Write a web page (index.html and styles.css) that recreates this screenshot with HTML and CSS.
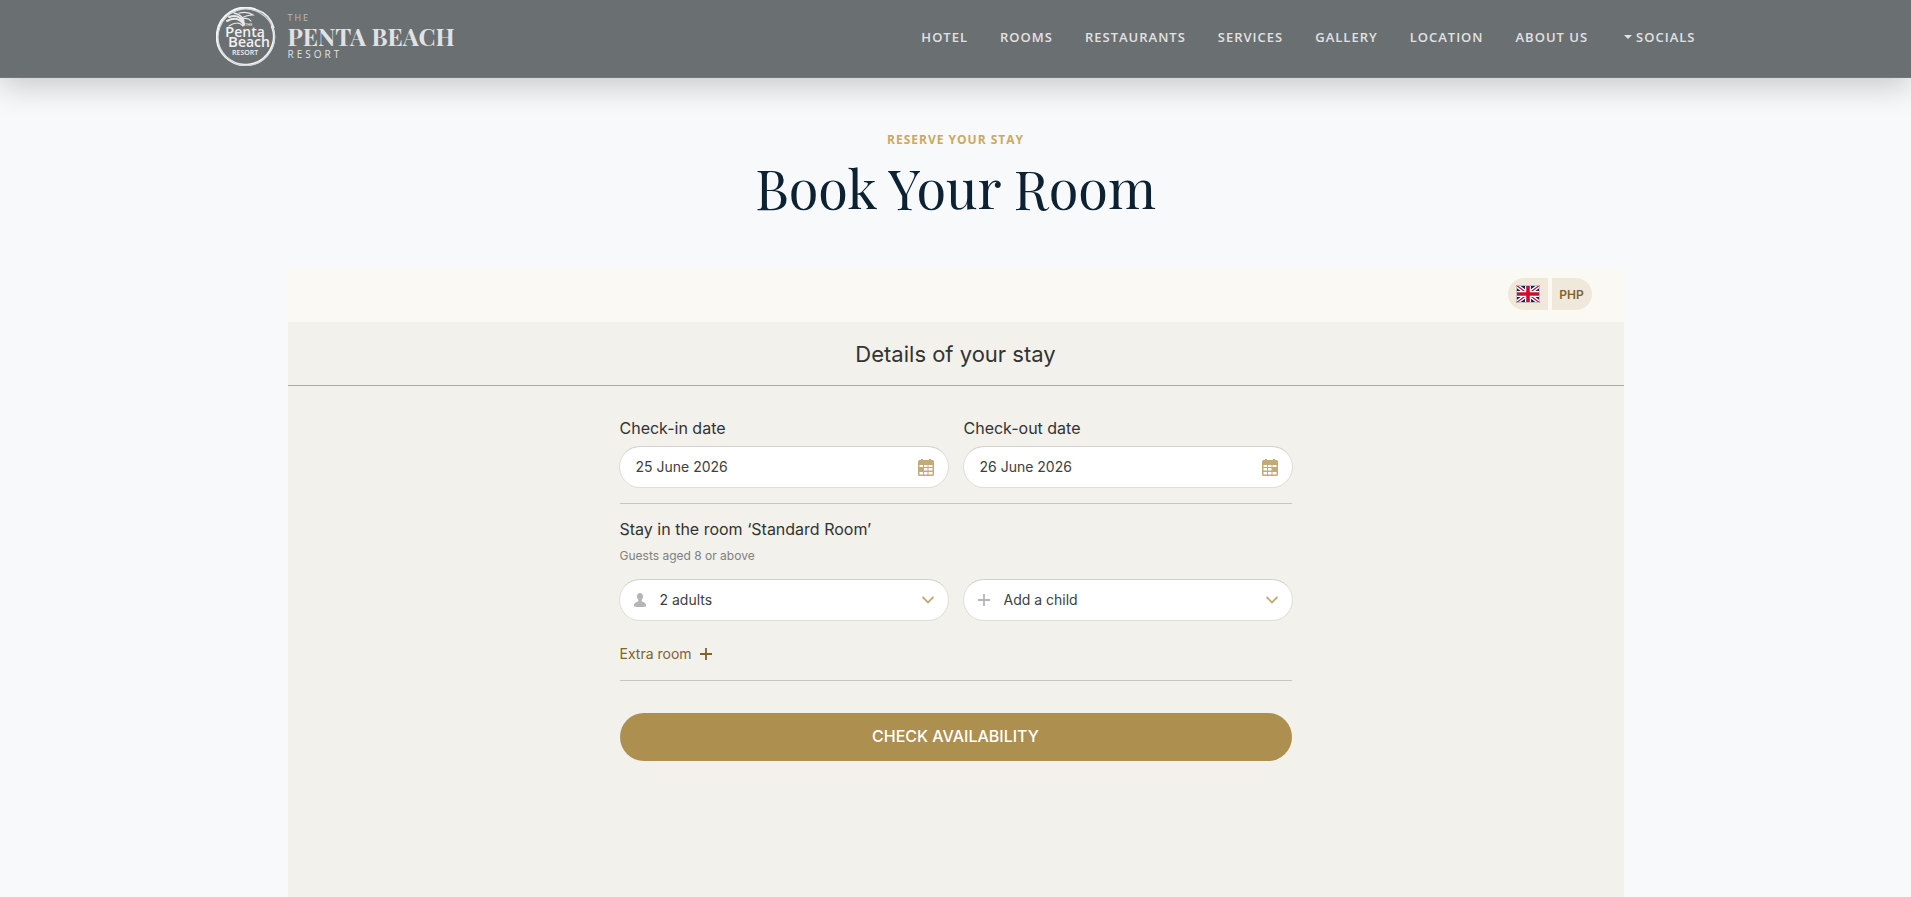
FILE: index.html
```html
<!DOCTYPE html>
<html lang="en">
<head>
    <meta charset="UTF-8">
    <meta name="viewport" content="width=device-width, initial-scale=1.0">
    <title>The Penta Beach Resort - Book Your Room</title>
    <link rel="stylesheet" href="styles.css">
</head>
<body>
    <header class="site-header">
        <div class="header-inner">
            <a href="#" class="brand">
                <svg class="brand-logo" viewBox="0 0 60 60" aria-hidden="true">
                    <!-- brushed ring -->
                    <path d="M56 19A28.500 28.500 0 1 1 39 2.500" fill="none" stroke="#f4f5f5" stroke-width="2.4" stroke-linecap="round"/>
                    <path d="M44 6A27.500 27.500 0 0 0 4 20A27.500 27.500 0 0 0 14 53A27.500 27.500 0 0 0 51 49A27.500 27.500 0 0 0 44 6" fill="none" stroke="#d4d7d8" stroke-width="1.2"/>
                    <path d="M40 2.500Q54 7 58 21" fill="none" stroke="#eceded" stroke-width="1.6"/>
                    <!-- palm -->
                    <g fill="none" stroke="#e8eaea" stroke-linecap="round">
                        <path d="M11 14Q22 8 28 18" stroke-width="2"/>
                        <path d="M13 10Q24 6 28 17" stroke-width="2"/>
                        <path d="M18 6Q28 8 28 17" stroke-width="1.5"/>
                        <path d="M13 19Q22 13 27 19" stroke-width="1.2"/>
                        <path d="M23 6Q32 4 37 8Q30 8 24 12" stroke-width="1.2"/>
                        <path d="M26 12Q32 10 35 14" stroke-width="1.2"/>
                    </g>
                    <g class="logo-text">
                        <text x="29" y="19" font-size="4">THE</text>
                        <text x="9" y="30" font-size="14"><tspan font-size="15">P</tspan>enta</text>
                        <text x="12" y="40" font-size="14"><tspan font-size="15">B</tspan>each</text>
                        <text x="16" y="48" font-size="7">RESORT</text>
                    </g>
                </svg>
                <span class="brand-text">
                    <span class="brand-the">THE</span>
                    <span class="brand-name">PENTA BEACH</span>
                    <span class="brand-resort">RESORT</span>
                </span>
            </a>
            <nav class="nav">
                <a href="#" class="nav-link">HOTEL</a>
                <a href="#" class="nav-link">ROOMS</a>
                <a href="#" class="nav-link">RESTAURANTS</a>
                <a href="#" class="nav-link">SERVICES</a>
                <a href="#" class="nav-link">GALLERY</a>
                <a href="#" class="nav-link">LOCATION</a>
                <a href="#" class="nav-link">ABOUT US</a>
                <button type="button" class="nav-link nav-toggle"><span class="caret"></span>SOCIALS</button>
            </nav>
        </div>
    </header>

    <main class="page">
        <p class="eyebrow">RESERVE YOUR STAY</p>
        <h1 class="title">Book Your Room</h1>

        <section class="booking">
            <div class="booking-bar">
                <button type="button" class="pill pill-left" aria-label="Language: English">
                    <svg class="flag" viewBox="0 0 24 18" aria-hidden="true">
                        <path fill="#012169" d="M0 0h24v18H0z"/>
                        <path stroke="#fff" stroke-width="4" d="M0 0l24 18M24 0L0 18"/>
                        <path stroke="#c8102e" stroke-width="1.3" d="M0 0l24 18M24 0L0 18"/>
                        <path stroke="#fff" stroke-width="6" d="M12 0v18M0 9h24"/>
                        <path stroke="#c8102e" stroke-width="3.6" d="M12 0v18M0 9h24"/>
                        <path fill="none" stroke="#c4bfb9" stroke-width="1" d="M.5.5h23v17H.5z"/>
                    </svg>
                </button>
                <button type="button" class="pill pill-right">PHP</button>
            </div>

            <h2 class="booking-title">Details of your stay</h2>

            <form class="booking-form">
                <div class="group">
                    <div class="row">
                        <div>
                            <label class="label" for="checkIn">Check-in date</label>
                            <div class="field">
                                <input class="control" type="text" id="checkIn" value="25 June 2026" readonly>
                                <svg class="icon-end" viewBox="0 0 16 17" aria-hidden="true">
                                    <path fill="#c4aa74" fill-rule="evenodd" d="M3 0h2v1h6V0h2v1h1.500a1.500 1.500 0 0 1 1.500 1.500V15.500a1.500 1.500 0 0 1-1.500 1.500h-13A1.500 1.500 0 0 1 0 15.500v-13A1.500 1.500 0 0 1 1.500 1H3zM1.500 6v2H5V6zM6 6v2h3.500V6zM10.500 6v2h4V6zM6 9v2.500h3.500V9zM10.500 9v2.500h4V9zM1.500 13v2.500H5V13zM6 13v2.500h3.500V13zM10.500 13v2.500h4V13z"/>
                                </svg>
                            </div>
                        </div>
                        <div>
                            <label class="label" for="checkOut">Check-out date</label>
                            <div class="field">
                                <input class="control" type="text" id="checkOut" value="26 June 2026" readonly>
                                <svg class="icon-end" viewBox="0 0 16 17" aria-hidden="true">
                                    <path fill="#c4aa74" fill-rule="evenodd" d="M3 0h2v1h6V0h2v1h1.500a1.500 1.500 0 0 1 1.500 1.500V15.500a1.500 1.500 0 0 1-1.500 1.500h-13A1.500 1.500 0 0 1 0 15.500v-13A1.500 1.500 0 0 1 1.500 1H3zM1.500 6v2H5V6zM6 6v2h3.500V6zM10.500 6v2h4V6zM1.500 9v2.500H5V9zM6 9v2.500h3.500V9zM1.500 13v2.500H5V13zM6 13v2.500h3.500V13zM10.500 13v2.500h4V13z"/>
                                </svg>
                            </div>
                        </div>
                    </div>
                </div>

                <div class="group">
                    <p class="label">Stay in the room ‘Standard Room’</p>
                    <p class="hint">Guests aged 8 or above</p>
                    <div class="row">
                        <div class="field">
                            <svg class="icon-start" viewBox="0 0 12 14" aria-hidden="true">
                                <path fill="#b5b5b5" d="M6 0C8 0 9 1.300 9 3.200 9 5 8.200 6.200 7.600 6.800V8.300C9 9.300 12 9.500 12 12.500V13.500Q6 14.500 0 13.500V12.500C0 9.500 3 9.300 4.400 8.300V6.800C3.800 6.200 3 5 3 3.200 3 1.300 4 0 6 0z"/>
                            </svg>
                            <select class="control control-select" aria-label="Adults">
                                <option>1 adult</option>
                                <option selected>2 adults</option>
                                <option>3 adults</option>
                            </select>
                            <svg class="chevron" viewBox="0 0 12 8" aria-hidden="true">
                                <path fill="none" stroke="#c4aa74" stroke-width="1.800" d="M.6 1L6 6.400 11.400 1"/>
                            </svg>
                        </div>
                        <div class="field">
                            <svg class="icon-start" viewBox="0 0 12 12" aria-hidden="true">
                                <path stroke="#b5b5b5" stroke-width="1.800" d="M6 0v12M0 6h12"/>
                            </svg>
                            <select class="control control-select" aria-label="Children">
                                <option>Add a child</option>
                                <option>1 child</option>
                                <option>2 children</option>
                            </select>
                            <svg class="chevron" viewBox="0 0 12 8" aria-hidden="true">
                                <path fill="none" stroke="#c4aa74" stroke-width="1.800" d="M.6 1L6 6.400 11.400 1"/>
                            </svg>
                        </div>
                    </div>
                    <button type="button" class="extra">
                        Extra room
                        <svg class="extra-icon" viewBox="0 0 12 12" aria-hidden="true">
                            <path stroke="#7d642c" stroke-width="1.800" d="M6 0v12M0 6h12"/>
                        </svg>
                    </button>
                </div>

                <button type="submit" class="submit">CHECK AVAILABILITY</button>
            </form>
        </section>
    </main>
</body>
</html>
```

FILE: styles.css
```css
* {
    box-sizing: border-box;
}
html {
    height: 100%;
}
body {
    margin: 0;
    min-height: 100%;
    display: flex;
    flex-direction: column;
    background: #f8f9fb;
    color: #333;
    font-family: "Open Sans", "Noto Sans", sans-serif;
}
button, input, select {
    font-family: inherit;
}
h1, h2, p {
    margin: 0;
}

/* header */
.site-header {
    background: #6a6f72;
    border-bottom: 1px solid #75777a;
    box-shadow: 0 8px 32px rgba(0, 0, 0, 0.2);
}
.header-inner {
    max-width: 1544px;
    margin: 0 auto;
    padding: 7px 32px 10px;
    display: flex;
    align-items: center;
    justify-content: space-between;
}
.brand {
    display: flex;
    align-items: center;
    gap: 12px;
    text-decoration: none;
    color: #e1e2e3;
}
.brand-logo {
    width: 60px;
    height: 60px;
}
.logo-text {
    fill: #f0f1f1;
    font-family: "Open Sans", sans-serif;
    font-weight: 600;
}
.brand-text {
    display: flex;
    flex-direction: column;
    padding-bottom: 2px;
}
.brand-the {
    font-size: 9px;
    line-height: 12px;
    letter-spacing: 2px;
    color: #b9bcbd;
}
.brand-name {
    font-family: "Playfair Display", "Liberation Serif", serif;
    font-size: 24px;
    font-weight: 700;
    line-height: 24px;
}
.brand-resort {
    font-size: 10px;
    line-height: 12px;
    letter-spacing: 3px;
}
.nav {
    display: flex;
    align-items: center;
    gap: 32px;
}
.nav-link {
    border: 0;
    padding: 0;
    background: none;
    color: #e1e2e3;
    font-size: 13px;
    font-weight: 600;
    line-height: 20px;
    letter-spacing: 1px;
    text-decoration: none;
    cursor: pointer;
}
.nav-toggle {
    display: flex;
    align-items: center;
    gap: 4px;
    padding-left: 4px;
}
.caret {
    border: 4px solid transparent;
    border-top-color: #e1e2e3;
    border-bottom: 0;
}

/* booking */
.page {
    flex: 1;
    width: 100%;
    max-width: 1400px;
    margin: 0 auto;
    padding: 52px 32px 0;
    display: flex;
    flex-direction: column;
}
.eyebrow {
    color: #c9a961;
    font-size: 12px;
    font-weight: 700;
    line-height: 20px;
    letter-spacing: 1px;
    text-align: center;
}
.title {
    margin: 4px 0 46px;
    color: #0c2233;
    font-family: "Playfair Display", "Liberation Serif", serif;
    font-size: 54px;
    font-weight: 400;
    line-height: 68px;
    text-align: center;
}
.booking {
    flex: 1;
    background: #f2f1ec;
    font-family: Inter, sans-serif;
}
.booking-bar {
    display: flex;
    justify-content: flex-end;
    gap: 4px;
    padding: 10px 32px 12px;
    background: #fbf9f4;
}
.pill {
    display: flex;
    align-items: center;
    justify-content: center;
    width: 40px;
    height: 32px;
    padding: 0;
    border: 0;
    background: #f0e8db;
    color: #7d642c;
    font-size: 12px;
    font-weight: 600;
    cursor: pointer;
}
.pill-left {
    border-radius: 16px 0 0 16px;
}
.pill-right {
    border-radius: 0 16px 16px 0;
}
.flag {
    width: 24px;
    height: 18px;
}
.booking-title {
    padding: 16px 16px 15px;
    border-bottom: 1px solid #aaa9a5;
    font-size: 22px;
    font-weight: 400;
    line-height: 32px;
    text-align: center;
}
.booking-form {
    max-width: 704px;
    margin: 0 auto;
    padding: 32px 16px;
}
.group {
    margin-bottom: 15px;
    padding-bottom: 15px;
    border-bottom: 1px solid #c6c5c1;
}
.row {
    display: grid;
    grid-template-columns: 1fr 1fr;
    gap: 14px;
    margin: 0 -1px;
}
.label {
    display: block;
    font-size: 16px;
    line-height: 20px;
}
.row .label {
    margin: 0 1px 8px;
}
.hint {
    margin: 7px 0 13px;
    color: #808080;
    font-size: 12px;
    line-height: 20px;
}
.field {
    display: flex;
    align-items: center;
    height: 42px;
    padding: 0 14px;
    border: 1px solid #dfddd8;
    border-top-color: #d2d0cb;
    border-radius: 21px;
    background: #fff;
}
.control {
    flex: 1;
    min-width: 0;
    height: 40px;
    padding: 0 2px 1px;
    border: 0;
    outline: 0;
    background: none;
    color: #404040;
    font-size: 14px;
}
.control-select {
    padding: 0 14px 1px;
    appearance: none;
}
.icon-end {
    width: 16px;
    height: 17px;
}
.icon-start {
    width: 12px;
    height: 14px;
}
.chevron {
    width: 12px;
    height: 8px;
}
.extra {
    display: flex;
    align-items: center;
    gap: 8px;
    margin-top: 22px;
    padding: 0;
    border: 0;
    background: none;
    color: #7d642c;
    font-size: 14px;
    line-height: 22px;
    cursor: pointer;
}
.extra-icon {
    width: 12px;
    height: 12px;
}
.submit {
    display: block;
    width: 100%;
    height: 48px;
    margin-top: 32px;
    padding: 0 0 2px;
    border: 0;
    border-radius: 24px;
    background: #ad8f50;
    color: #fff;
    font-size: 16px;
    font-weight: 500;
    cursor: pointer;
}
```
